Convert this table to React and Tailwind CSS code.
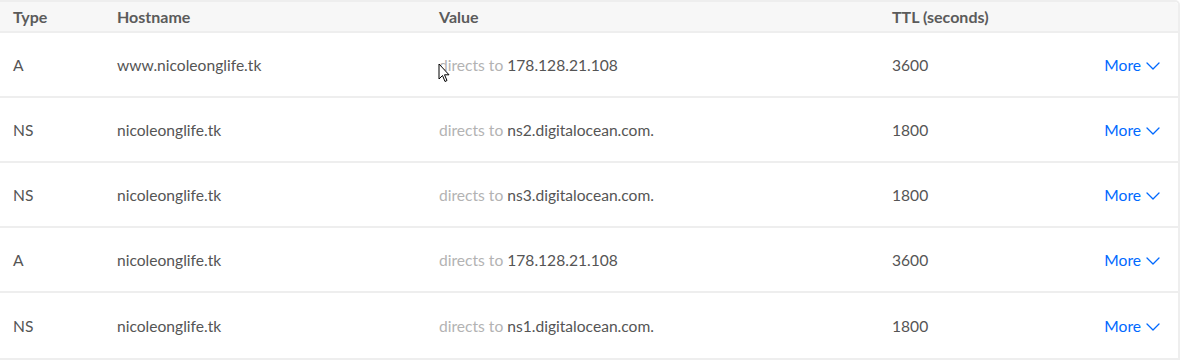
import { ChevronDown } from 'lucide-react';

const records = [
  { type: 'A', host: 'www.nicoleonglife.tk', value: '178.128.21.108', ttl: '3600' },
  { type: 'NS', host: 'nicoleonglife.tk', value: 'ns2.digitalocean.com.', ttl: '1800' },
  { type: 'NS', host: 'nicoleonglife.tk', value: 'ns3.digitalocean.com.', ttl: '1800' },
  { type: 'A', host: 'nicoleonglife.tk', value: '178.128.21.108', ttl: '3600' },
  { type: 'NS', host: 'nicoleonglife.tk', value: 'ns1.digitalocean.com.', ttl: '1800' },
];

const cols = 'grid grid-cols-[104px_322px_453px_1fr_auto] items-center';

export default function App() {
  return (
    <div className="bg-white w-[1181px] h-[360px] font-['Lato',sans-serif]">
      <div className="relative w-[1180px] border-t-2 border-r-2 border-b-2 border-[#eeeeee] rounded-tr-[5px]">
        {/* Header */}
        <div className={`${cols} h-[31px] bg-[#f7f7f7] pl-[13px] pr-5 text-[16px] font-bold text-[#5b5b5b] border-b-2 border-[#eeeeee] rounded-tr-[4px]`}>
          <div>Type</div>
          <div>Hostname</div>
          <div>Value</div>
          <div>TTL (seconds)</div>
          <div />
        </div>

        {/* Rows */}
        {records.map((r, i) => (
          <div
            key={i}
            className={`${cols} h-[65px] pt-[3px] pl-[13px] pr-[13px] text-[15.6px] text-[#555555] ${
              i < records.length - 1 ? 'border-b-2 border-[#eeeeee]' : ''
            }`}
          >
            <div>{r.type}</div>
            <div>{r.host}</div>
            <div>
              <span className="text-[#b3b3b3]">directs to</span> {r.value}
            </div>
            <div>{r.ttl}</div>
            <div className="flex items-center gap-0 text-[#0069ff]">
              More
              <ChevronDown size={24} strokeWidth={1.3} />
            </div>
          </div>
        ))}

        {/* Mouse cursor */}
        <svg className="absolute left-[438px] top-[61px]" width="12" height="20" viewBox="0 0 12 20">
          <path d="M1 1 L1 16 L4.5 12.5 L7 18.5 L9 17.5 L6.5 11.8 L11 11.8 Z" fill="white" stroke="black" strokeWidth="1" strokeLinejoin="round" />
        </svg>
      </div>
    </div>
  );
}
